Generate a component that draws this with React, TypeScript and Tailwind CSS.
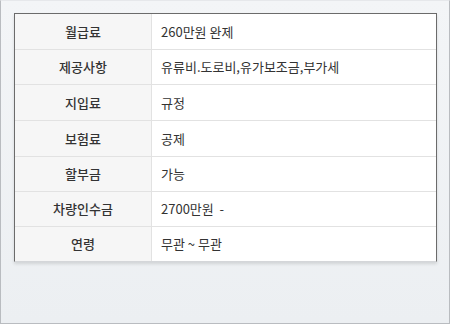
const rows: { label: string; value: string; h: string }[] = [
  { label: "월급료", value: "260만원 완제", h: "h-[36px]" },
  { label: "제공사항", value: "유류비.도로비,유가보조금,부가세", h: "h-[35px]" },
  { label: "지입료", value: "규정", h: "h-[36px]" },
  { label: "보험료", value: "공제", h: "h-[36px]" },
  { label: "할부금", value: "가능", h: "h-[35px]" },
  { label: "차량인수금", value: "2700만원  -", h: "h-[35px]" },
  { label: "연령", value: "무관 ~ 무관", h: "h-[34px]" },
];

export default function App() {
  return (
    <div
      className="w-[450px] h-[324px] bg-gradient-to-b from-[#f3f5f7] to-[#eceff2] border border-[#b9bcc0] border-t-[#e6e8eb] pl-[13px] pr-[12px] pt-[12px]"
      style={{ fontFamily: '"Noto Sans CJK KR", "Noto Sans", sans-serif' }}
    >
      <div className="w-[423px] border-t border-l border-r border-[#6b6b6b] border-b border-b-[#d4d6d9] bg-white shadow-[0_2px_3px_rgba(0,0,0,0.12)]">
        {rows.map((r, i) => (
          <div
            key={r.label}
            className={`flex ${r.h} ${i < rows.length - 1 ? "border-b border-[#e2e2e2]" : ""}`}
          >
            <div className="w-[137px] shrink-0 bg-[#f6f6f6] border-r border-[#e2e2e2] flex items-center justify-center text-[13px] font-medium text-[#333]">
              {r.label}
            </div>
            <div className="flex-1 flex items-center pl-[9px] text-[13px] text-[#333] whitespace-pre">
              {r.value}
            </div>
          </div>
        ))}
      </div>
    </div>
  );
}
